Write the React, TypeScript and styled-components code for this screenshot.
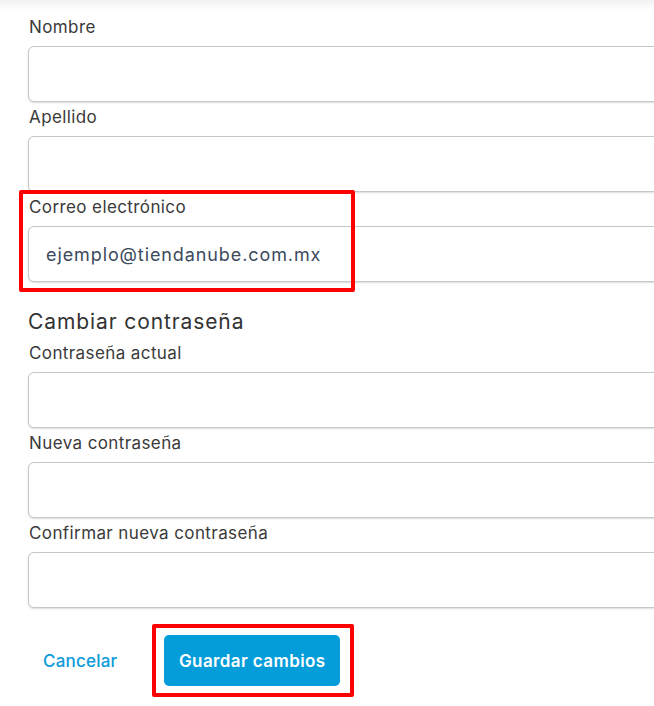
import { createGlobalStyle, styled } from "styled-components";

const GlobalStyle = createGlobalStyle`
  body {
    margin: 0;
    background: #ffffff;
    font-family: Inter, Lato, sans-serif;
    overflow: hidden;
  }
`;

const TopShade = styled.div`
  height: 10px;
  background: linear-gradient(#f1f1f1, #ffffff);
`;

const Form = styled.form`
  display: flex;
  flex-direction: column;
  padding: 2px 0 40px 28px;
`;

const Field = styled.div`
  position: relative;
  display: flex;
  flex-direction: column;
`;

const Label = styled.label`
  font-size: 17px;
  line-height: 24px;
  letter-spacing: 0.4px;
  color: #3a3a3a;
  padding: 3px 0 0 1px;
  margin-bottom: 7px;
`;

const Input = styled.input`
  box-sizing: border-box;
  width: 700px;
  height: 56px;
  padding: 0 17px;
  border: 1px solid #c3c8cd;
  border-radius: 6px;
  box-shadow: 0 1px 2px rgba(0, 0, 0, 0.14);
  font-family: Inter, Lato, sans-serif;
  font-size: 18px;
  letter-spacing: 0.9px;
  color: #3c4a5d;
  background: #ffffff;
  outline: none;
`;

const Heading = styled.h3`
  margin: 26px 0 2px;
  font-size: 21px;
  line-height: 28px;
  letter-spacing: 0.9px;
  font-weight: 400;
  color: #333333;
`;

const Actions = styled.div`
  position: relative;
  display: flex;
  align-items: center;
  gap: 32px;
  margin-top: 27px;
`;

const LinkButton = styled.button`
  border: none;
  background: none;
  padding: 0 15px;
  font-family: Inter, Lato, sans-serif;
  font-size: 17px;
  font-weight: 500;
  letter-spacing: 0.2px;
  color: #0a9bd8;
  cursor: pointer;
`;

const PrimaryButton = styled.button`
  height: 51px;
  width: 176px;
  border: none;
  border-radius: 5px;
  background: #049dda;
  color: #ffffff;
  font-family: Inter, Lato, sans-serif;
  font-size: 17px;
  font-weight: 600;
  letter-spacing: 0.4px;
  cursor: pointer;
`;

const Highlight = styled.div<{ $top: number; $left: number; $w: number; $h: number }>`
  position: absolute;
  z-index: 2;
  top: ${(p) => p.$top}px;
  left: ${(p) => p.$left}px;
  width: ${(p) => p.$w}px;
  height: ${(p) => p.$h}px;
  box-shadow: inset 0 0 0 4px #ff0000;
  border-radius: 2px;
  pointer-events: none;
`;

export default function App() {
  return (
    <>
      <GlobalStyle />
      <TopShade />
      <Form onSubmit={(e) => e.preventDefault()}>
        <Field>
          <Label>Nombre</Label>
          <Input type="text" />
        </Field>
        <Field>
          <Label>Apellido</Label>
          <Input type="text" />
        </Field>
        <Field>
          <Label>Correo electrónico</Label>
          <Input type="email" defaultValue="ejemplo@tiendanube.com.mx" />
          <Highlight $top={-2} $left={-9} $w={336} $h={102} />
        </Field>
        <Heading>Cambiar contraseña</Heading>
        <Field>
          <Label>Contraseña actual</Label>
          <Input type="password" />
        </Field>
        <Field>
          <Label>Nueva contraseña</Label>
          <Input type="password" />
        </Field>
        <Field>
          <Label>Confirmar nueva contraseña</Label>
          <Input type="password" />
        </Field>
        <Actions>
          <LinkButton type="button">Cancelar</LinkButton>
          <PrimaryButton type="submit">Guardar cambios</PrimaryButton>
          <Highlight $top={-11} $left={124} $w={202} $h={73} />
        </Actions>
      </Form>
    </>
  );
}
